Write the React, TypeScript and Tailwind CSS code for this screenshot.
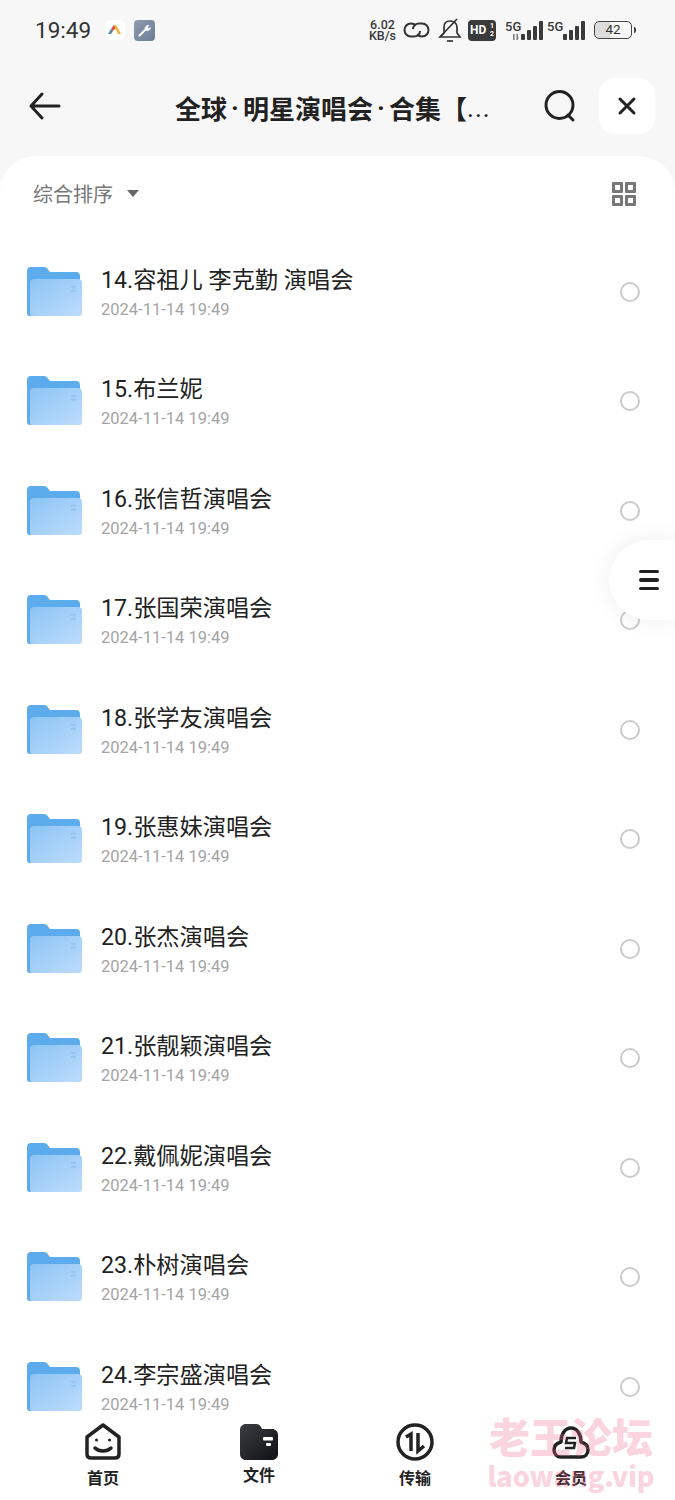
const fontFamily = "font-['Roboto','Noto_Sans_CJK_SC',sans-serif]";

const folders = [
  '14.容祖儿 李克勤 演唱会',
  '15.布兰妮',
  '16.张信哲演唱会',
  '17.张国荣演唱会',
  '18.张学友演唱会',
  '19.张惠妹演唱会',
  '20.张杰演唱会',
  '21.张靓颖演唱会',
  '22.戴佩妮演唱会',
  '23.朴树演唱会',
  '24.李宗盛演唱会',
];

function FolderIcon({ id }: { id: number }) {
  return (
    <svg width="55" height="50" viewBox="0 0 55 50" className="shrink-0">
      <defs>
        <linearGradient id={`front-${id}`} x1="0" y1="0" x2="1" y2="1">
          <stop offset="0" stopColor="#8cc4f4" />
          <stop offset="1" stopColor="#bddcfc" />
        </linearGradient>
      </defs>
      <path
        d="M4 0h13c2 0 3 1 4 2.500l2 2.500h26c2.500 0 4 1.500 4 4v36c0 2.500-1.500 4-4 4H3c-2 0-3-1-3-3V4c0-2.500 1.500-4 4-4z"
        fill="#5cabec"
      />
      <path
        d="M7 12h44c2.500 0 4 1.500 4 4v30c0 2.500-1.500 3-4 3H4c-.5-.5-1-1.500-1-3V16c0-2.500 1.500-4 4-4z"
        fill={`url(#front-${id})`}
      />
      <rect x="44" y="19" width="5" height="1.500" fill="#8fc0ee" />
      <rect x="44" y="23" width="5" height="1.500" fill="#8fc0ee" />
    </svg>
  );
}

function Signal({ arrows }: { arrows?: boolean }) {
  return (
    <div className="flex items-start">
      <div className="-mr-[22px] w-[30px] text-[13px] leading-[13px] font-medium text-[#3a3a3a]">5G</div>
      <svg width="30" height="20" viewBox="0 0 30 20" fill="#3a3a3a">
        {arrows && <path d="M1 20v-6l-1 2zM4 14v6l1-2z" fill="#777" stroke="#777" strokeWidth="1" />}
        <rect x="8" y="14" width="4" height="6" rx="1" />
        <rect x="14" y="10" width="4" height="10" rx="1" />
        <rect x="20" y="6" width="4" height="14" rx="1" />
        <rect x="26" y="1" width="4" height="19" rx="1" />
      </svg>
    </div>
  );
}

function StatusBar() {
  return (
    <div className="flex h-[56px] items-center justify-between pt-[4px] pl-[35px] pr-[39px]">
      <div className="flex items-center">
        <span className="text-[22.500px] leading-none text-[#333]">19:49</span>
        <svg width="20" height="20" viewBox="0 0 20 20" className="ml-[14px]">
          <rect width="20" height="20" rx="5" fill="#fff" />
          <path d="M3 14l3-5 2 2-2 3z" fill="#4f86a8" />
          <path d="M6 9l3-4 2 3-3 3z" fill="#d2553f" />
          <path d="M9 5h2l5 9h-3z" fill="#f2b02c" />
        </svg>
        <div className="ml-[9px] flex size-[21px] items-center justify-center rounded-[4px] bg-[linear-gradient(135deg,#8d9bb0,#6c7d94)]">
          <svg width="15" height="15" viewBox="0 0 15 15" fill="none" stroke="#fff" strokeLinecap="round">
            <path d="M2.500 12.500l6-6" strokeWidth="2" />
            <path d="M8 5.500a3 3 0 0 1 4-3l-1.500 2 1 1 2-1a3 3 0 0 1-4 3z" fill="#fff" strokeWidth="0.500" />
          </svg>
        </div>
      </div>
      <div className="flex items-center">
        <div className="flex w-[29px] flex-col items-center text-[12.500px] font-medium leading-[11px] text-[#3a3a3a]">
          <span>6.02</span>
          <span>KB/s</span>
        </div>
        <svg width="27" height="20" viewBox="0 0 27 20" fill="none" stroke="#333" strokeWidth="2" className="ml-[6px]">
          <path d="M13 5.500C11.500 4 9.500 3.500 8 3.500 4 3.500 1.500 6.500 1.500 10S4 16.500 8 16.500h3c3.500 0 6-2.500 6-5.500" />
          <path d="M14 14.500c1.500 1.500 3.500 2 5 2 4 0 6.500-3 6.500-6.500S23 3.500 19 3.500h-3c-3.500 0-6 2.500-6 5.500" />
        </svg>
        <svg width="24" height="26" viewBox="0 0 24 26" fill="none" stroke="#333" strokeWidth="1.700" className="ml-[8px]">
          <path d="M2 20h20l-3-4V10c0-3-2.500-6-7-6S6 7 6 10v6z" />
          <path d="M9 24h6" />
          <path d="M2 20L19 2" />
        </svg>
        <div className="ml-[6px] flex h-[21px] w-[28px] items-center justify-between rounded-[4px] bg-[#3a3a3a] px-[2px] font-bold text-white">
          <span className="text-[12px] leading-none">HD</span>
          <span className="flex flex-col text-[7px] leading-[8px]">
            <span>1</span>
            <span>2</span>
          </span>
        </div>
        <div className="ml-[9px]">
          <Signal arrows />
        </div>
        <div className="ml-[4px]">
          <Signal />
        </div>
        <div className="ml-[9px] flex h-[18px] w-[38px] items-center justify-center rounded-[5px] border border-[#444] bg-[linear-gradient(90deg,#dcdcdc_42%,transparent_42%)] text-[13.500px] leading-none text-[#333]">
          42
        </div>
        <div className="ml-[2px] h-[6px] w-[2px] rounded-r-sm bg-[#444]" />
      </div>
    </div>
  );
}

function Header() {
  return (
    <div className="flex h-[100px] items-center pl-[29px] pr-[20px]">
      <svg width="32" height="28" viewBox="0 0 32 28" fill="none" stroke="#222" strokeWidth="3" strokeLinecap="round" strokeLinejoin="round">
        <path d="M30 14H2M13 2L2 14l11 12" />
      </svg>
      <h1 className="ml-[114px] mt-[4px] flex w-[322px] shrink-0 font-['Noto_Sans_CJK_SC',sans-serif] text-[26px] leading-none font-bold whitespace-nowrap text-[#222]">
        <span>全球</span>
        <span className="w-[16px] text-center font-['Roboto',sans-serif]">·</span>
        <span>明星演唱会</span>
        <span className="w-[16px] text-center font-['Roboto',sans-serif]">·</span>
        <span>合集【</span>
        <span className="w-[26px] font-['Roboto',sans-serif] font-normal tracking-[1px]">...</span>
      </h1>
      <svg width="34" height="34" viewBox="0 0 34 34" fill="none" stroke="#222" strokeWidth="3" strokeLinecap="round" className="ml-[46px] shrink-0">
        <circle cx="16.500" cy="16" r="13.500" />
        <path d="M25 26l5 5" />
      </svg>
      <div className="ml-auto flex size-[56px] shrink-0 items-center justify-center rounded-2xl bg-white">
        <svg width="20" height="20" viewBox="0 0 20 20" fill="none" stroke="#222" strokeWidth="3" strokeLinecap="round">
          <path d="M3 3l14 14M17 3L3 17" />
        </svg>
      </div>
    </div>
  );
}

function NavItem({ label, icon, raised }: { label: string; icon: React.ReactNode; raised?: boolean }) {
  return (
    <div className="flex w-[156px] flex-col items-center">
      <div className="flex h-[38px] items-center justify-center">{icon}</div>
      <span className={`text-[16px] leading-none font-bold text-[#222] ${raised ? 'mt-[7px]' : 'mt-[10px]'}`}>{label}</span>
    </div>
  );
}

export default function App() {
  return (
    <div className={`relative flex h-[1500px] w-[675px] flex-col overflow-hidden bg-[#f7f7f8] ${fontFamily}`}>
      <StatusBar />
      <Header />

      <main className="flex min-h-0 flex-1 flex-col rounded-t-[36px] bg-white">
        <div className="flex h-[81px] shrink-0 items-center justify-between pl-[33px] pr-[39px] pb-[6px]">
          <div className="flex items-center">
            <span className="mt-[3px] text-[20px] leading-none text-[#777]">综合排序</span>
            <div className="ml-[14px] size-0 border-x-[6px] border-t-[7px] border-x-transparent border-t-[#666]" />
          </div>
          <div className="grid grid-cols-2 gap-[2px]">
            <div className="size-[11px] rounded-[1px] border-[3px] border-[#777]" />
            <div className="size-[11px] rounded-[1px] border-[3px] border-[#777]" />
            <div className="size-[11px] rounded-[1px] border-[3px] border-[#777]" />
            <div className="size-[11px] rounded-[1px] border-[3px] border-[#777]" />
          </div>
        </div>

        <div className="min-h-0 flex-1 overflow-hidden">
          {folders.map((name, i) => (
            <div key={name} className="flex h-[109.500px] items-center pl-[27px] pr-[35px]">
              <FolderIcon id={i} />
              <div className="ml-[19px] min-w-0 flex-1 pt-[2px]">
                <div className="text-[23.200px] leading-[30px] whitespace-nowrap text-[#222]">{name}</div>
                <div className="mt-[4px] text-[16.500px] leading-[22px] text-[#a4a4a4]">2024-11-14 19:49</div>
              </div>
              <div className="size-[20px] shrink-0 rounded-full border-2 border-[#cbcbcb]" />
            </div>
          ))}
        </div>

        <nav className="flex h-[88px] shrink-0 items-start bg-white pt-[11px] pl-[25px]">
          <NavItem
            label="首页"
            icon={
              <svg width="38" height="38" viewBox="0 0 38 38" fill="none" stroke="#222" strokeWidth="3.500" strokeLinecap="round" strokeLinejoin="round">
                <path d="M3 14L19 2l16 12v17c0 2.500-1.500 4-4 4H7c-2.500 0-4-1.500-4-4z" />
                <path d="M11 25c4 4 12 4 16 0" />
                <circle cx="12.500" cy="17" r="1.500" fill="#222" stroke="none" />
                <circle cx="25.500" cy="17" r="1.500" fill="#222" stroke="none" />
              </svg>
            }
          />
          <NavItem
            label="文件"
            raised
            icon={
              <svg width="38" height="36" viewBox="0 0 38 36">
                <defs>
                  <linearGradient id="nav-file" x1="0" y1="0" x2="1" y2="1">
                    <stop offset="0" stopColor="#3a3d42" />
                    <stop offset="1" stopColor="#101114" />
                  </linearGradient>
                </defs>
                <path d="M6 0h10c2.500 0 4 1 5 3l1 2h10c3.500 0 6 2.500 6 6v19c0 3.500-2.500 6-6 6H6c-3.500 0-6-2.500-6-6V6c0-3.500 2.500-6 6-6z" fill="url(#nav-file)" />
                <rect x="23" y="13" width="10" height="3.500" rx="1" fill="#fff" />
                <rect x="26" y="19" width="5" height="3" rx="1" fill="#fff" />
              </svg>
            }
          />
          <NavItem
            label="传输"
            icon={
              <svg width="38" height="38" viewBox="0 0 38 38" fill="none" stroke="#222" strokeWidth="3.500">
                <circle cx="19" cy="19" r="17" />
                <path d="M10 14l5-3v17" />
                <path d="M22 10v18l6-5" />
              </svg>
            }
          />
          <NavItem
            label="会员"
            icon={
              <svg width="40" height="36" viewBox="0 0 40 36" fill="none" stroke="#222" strokeWidth="3.500" strokeLinecap="round" strokeLinejoin="round">
                <path d="M3 26c0 4 3 7 7 7h20c4 0 7-3 7-7 0-4-3-7-7-8 0-8-4-14-10-14s-10 6-10 14c-4 1-7 4-7 8z" />
                <path d="M25 14h-9l-1 5h9l-1 5h-9" strokeWidth="2.500" strokeLinecap="butt" strokeLinejoin="miter" />
              </svg>
            }
          />
        </nav>
      </main>

      {/* floating side menu */}
      <div className="absolute top-[540px] right-0 flex h-[80px] w-[66px] items-center rounded-l-[40px] bg-white pl-[30px] shadow-[0_0_24px_rgba(0,0,0,0.07)]">
        <div className="flex w-[20px] flex-col gap-[5px]">
          <div className="h-[3.500px] rounded-full bg-[#222]" />
          <div className="h-[3.500px] rounded-full bg-[#222]" />
          <div className="h-[3.500px] rounded-full bg-[#222]" />
        </div>
      </div>

      {/* forum watermark */}
      <div className="pointer-events-none absolute top-[1412px] left-[486px] flex w-[170px] flex-col items-center font-['Noto_Sans_CJK_SC',sans-serif] font-black text-[#f06a8e]/30">
        <div className="text-[41px] leading-[46px] whitespace-nowrap">老王论坛</div>
        <div className="text-[27px] leading-[36px] whitespace-nowrap">laowang.vip</div>
      </div>
    </div>
  );
}
